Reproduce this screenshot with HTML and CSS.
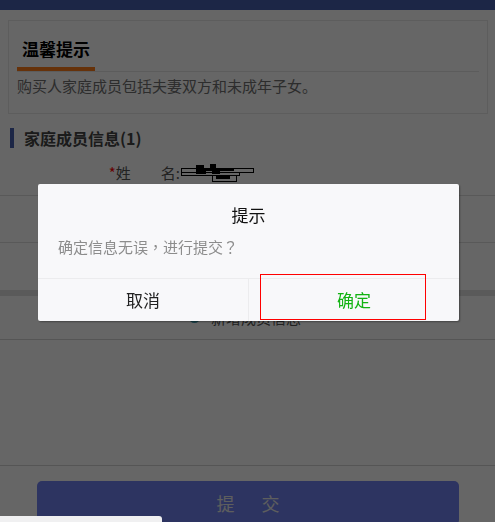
FILE: index.html
```
<!doctype html>
<html lang="zh-CN">

<head>
    <meta charset="UTF-8">
    <title>家庭成员信息</title>
    <link rel="stylesheet" href="styles.css">
</head>

<body>
    <div class="topbar"></div>

    <div class="tip-card">
        <div class="tip-head"><span>温馨提示</span></div>
        <p class="tip-text">购买人家庭成员包括夫妻双方和未成年子女。</p>
    </div>

    <h3 class="sec-title">家庭成员信息(1)</h3>

    <ul class="form">
        <li class="row">
            <label class="label"><i>*</i>姓　　名:</label>
            <div class="value">
                <!-- 打码 -->
                <svg class="redact" width="76" height="20" viewBox="0 0 76 20">
                    <rect x="1.5" y="5.5" width="72" height="4" fill="none" stroke="#000"/>
                    <rect x="1.5" y="9.5" width="58" height="3" fill="none" stroke="#000"/>
                    <rect x="32.5" y="12.5" width="24" height="6" fill="none" stroke="#000"/>
                    <path d="M16 2h8v4h6V1h6v4h18v3H40v3h-8V8h-6v3H16z" fill="#000"/>
                    <path d="M36 13h14v3H36z" fill="#000"/>
                </svg>
            </div>
        </li>
        <li class="row"></li>
        <li class="row last"></li>
    </ul>

    <div class="gap"></div>

    <div class="add-row"><span class="radio"></span>新增成员信息</div>

    <div class="footer">
        <button class="btn-submit">提交</button>
    </div>

    <div class="mask"></div>

    <div class="dialog">
        <div class="dialog-bd">
            <h4>提示</h4>
            <p lang="zh-TW">确定信息无误，进行提交？</p>
        </div>
        <div class="dialog-ft">
            <a class="cancel">取消</a>
            <a class="ok">确定</a>
        </div>
        <div class="focus-box"></div>
    </div>

    <div class="strip"></div>
</body>

</html>
```

FILE: styles.css
```
* {
    margin: 0;
    padding: 0;
    list-style: none;
    box-sizing: border-box;
}

body {
    font-family: "Noto Sans CJK SC", "Microsoft YaHei", sans-serif;
    background: #fff;
    color: #333;
    height: 522px;
    overflow: hidden;
}

.topbar {
    height: 10px;
    background: #465faf;
}

/* 温馨提示 */
.tip-card {
    margin: 10px 7px 0 8px;
    border: 1px solid #e8e8e8;
    padding-bottom: 17px;
}

.tip-head {
    margin: 0 8px;
    border-bottom: 1px solid #e6e6e6;
}

.tip-head span {
    display: inline-block;
    padding: 16px 5px 7px;
    font-size: 17px;
    line-height: 23px;
    font-weight: bold;
    color: #000;
    border-bottom: 4px solid #ff7d1a;
}

.tip-text {
    margin: 4px 8px 0;
    font-size: 15px;
    line-height: 20px;
    color: #707070;
}

.sec-title {
    margin: 14px 0 0 10px;
    height: 20px;
    padding-left: 10px;
    border-left: 4px solid #465faf;
    font-size: 16px;
    line-height: 20px;
    color: #444;
}

/* 表单 */
.form {
    margin-top: 1px;
}

.row {
    display: flex;
    align-items: center;
    height: 47px;
    border-bottom: 1px solid #dfdfdf;
}

.row.last {
    border-bottom: none;
}

.label {
    width: 180px;
    text-align: right;
    font-size: 15px;
    color: #555;
}

.label i {
    font-style: normal;
    color: #f00;
}

.value {
    flex: 1;
    display: flex;
    align-items: center;
}

.redact {
    display: block;
    margin-top: 2px;
}

.gap {
    height: 6px;
    background: #e2e2e2;
}

.add-row {
    height: 44px;
    display: flex;
    align-items: center;
    justify-content: center;
    gap: 11px;
    font-size: 15px;
    color: #555;
    border-bottom: 1px solid #d5d5d5;
    padding-right: 5px;
}

.radio {
    width: 11px;
    height: 11px;
    border-radius: 50%;
    background: #3a9bb0;
}

.footer {
    margin-top: 125px;
    border-top: 1px solid #d5d5d5;
    padding: 15px 36px 0 37px;
}

.btn-submit {
    display: block;
    width: 100%;
    height: 44px;
    border: none;
    border-radius: 5px;
    background: #7082f2;
    color: #ebebeb;
    font-family: inherit;
    font-size: 18px;
    letter-spacing: 27px;
    text-indent: 27px;
}

/* 弹窗 */
.mask {
    position: fixed;
    left: 0;
    top: 0;
    right: 0;
    bottom: 0;
    background: rgba(0, 0, 0, .6);
}

.dialog {
    position: fixed;
    left: 38px;
    top: 184px;
    width: 421px;
    background: #f8f8fa;
    border-radius: 2px;
    box-shadow: 1px 1px 2px rgba(0, 0, 0, .35);
}

.dialog-bd {
    padding: 20px 20px 20px;
    border-bottom: 1px solid #ececee;
}

.dialog-bd h4 {
    font-size: 17px;
    line-height: 22px;
    font-weight: normal;
    text-align: center;
    color: #111;
}

.dialog-bd p {
    margin-top: 10px;
    font-family: "Noto Sans CJK TC", "Noto Sans CJK SC", sans-serif;
    font-size: 15px;
    line-height: 22px;
    color: #8c8c8c;
}

.dialog-ft {
    display: flex;
    height: 42px;
}

.dialog-ft a {
    flex: 1;
    text-align: center;
    font-size: 17px;
    line-height: 42px;
    cursor: pointer;
}

.dialog-ft .cancel {
    color: #222;
    border-right: 1px solid #ececee;
}

.dialog-ft .ok {
    color: #12b312;
}

/* 调试框 */
.focus-box {
    position: absolute;
    left: 222px;
    top: 90px;
    width: 166px;
    height: 46px;
    border: 1px solid #f00;
}

.strip {
    position: fixed;
    left: 0;
    bottom: 0;
    width: 162px;
    height: 6px;
    background: #f0f0f1;
    border-top-right-radius: 3px;
}
```
